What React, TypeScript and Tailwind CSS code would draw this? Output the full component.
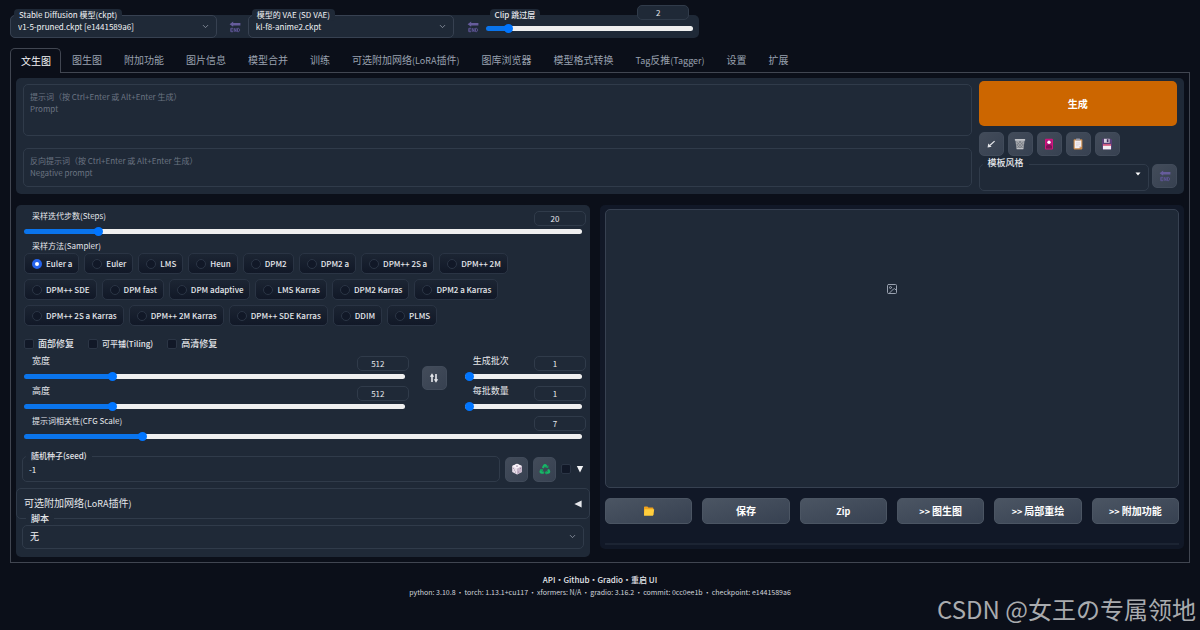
import { useState } from "react";
import type { CSSProperties, ReactNode } from "react";
import { ChevronDown, Image as ImageIcon } from "lucide-react";

const TABS = [
  "文生图",
  "图生图",
  "附加功能",
  "图片信息",
  "模型合并",
  "训练",
  "可选附加网络(LoRA插件)",
  "图库浏览器",
  "模型格式转换",
  "Tag反推(Tagger)",
  "设置",
  "扩展",
];

const SAMPLERS = [
  "Euler a",
  "Euler",
  "LMS",
  "Heun",
  "DPM2",
  "DPM2 a",
  "DPM++ 2S a",
  "DPM++ 2M",
  "DPM++ SDE",
  "DPM fast",
  "DPM adaptive",
  "LMS Karras",
  "DPM2 Karras",
  "DPM2 a Karras",
  "DPM++ 2S a Karras",
  "DPM++ 2M Karras",
  "DPM++ SDE Karras",
  "DDIM",
  "PLMS",
];

const VERSIONS = [
  "python: 3.10.8",
  "torch: 1.13.1+cu117",
  "xformers: N/A",
  "gradio: 3.16.2",
  "commit: 0cc0ee1b",
  "checkpoint: e1441589a6",
];

const hasLatin = (text: string) => /[\x21-\x7e]/.test(text);

// Latin letters in this typeface run large beside Chinese, so mixed labels go one size down.
const labelSize = (text: string) => (hasLatin(text) ? "text-[8px]" : "text-[9px]");

function MixedText({ text }: { text: string }) {
  return (
    <span>
      {text
        .split(/([\x20-\x7e]+)/)
        .filter(Boolean)
        .map((run, index) => (
          <span key={index} className={hasLatin(run) ? "text-[9px]" : undefined}>
            {run}
          </span>
        ))}
    </span>
  );
}

function EndArrowIcon() {
  return (
    <svg viewBox="0 0 12 12" className="size-3" aria-hidden="true">
      <path d="M.6 3.2 4.2.6v1.5h7.2v2.3H4.2v1.4z" fill="#665c9c" />
      <path
        d="M4 7.3H1.8v3.4H4M1.8 9h1.9M5.2 10.9V7.3l1.9 3.4V7.1M8.6 7.3v3.4h.6c1 0 1.4-.8 1.4-1.7s-.4-1.7-1.4-1.7z"
        fill="none"
        stroke="#5f5697"
        strokeWidth="1"
      />
    </svg>
  );
}

function ArrowDownLeftIcon() {
  return (
    <svg viewBox="0 0 12 12" className="size-3" aria-hidden="true">
      <path d="M9.6 3.1 5 7.3" stroke="#e5e7eb" strokeWidth="1.2" />
      <path d="M2.6 9.4 3.2 5.4 6.6 8.8z" fill="#e5e7eb" />
    </svg>
  );
}

function TrashIcon() {
  return (
    <svg viewBox="0 0 12 12" className="size-3" aria-hidden="true">
      <path d="M1.4 2.2h9.2l-1.2 9H2.6z" fill="#a3a6ab" />
      <path
        d="m2.4 3.6 6.4 6.6M5 3l4.6 4.4M2.6 6.4l4 4.4M9.6 3.6l-6.4 6.6M7 3 2.6 7.4M9.4 6.4l-4 4.4"
        stroke="#6b7079"
        strokeWidth=".6"
      />
      <rect x=".8" y=".9" width="10.4" height="1.8" rx=".6" fill="#c3c5c9" />
      <path d="M2.8 10.6h6.4" stroke="#c3c5c9" strokeWidth="1" />
    </svg>
  );
}

function CardIcon() {
  return (
    <svg viewBox="0 0 12 12" className="size-3" aria-hidden="true">
      <rect x="2" y=".8" width="8" height="10.6" rx=".9" fill="#d1167c" />
      <rect x="3" y="1.8" width="6" height="8.6" fill="#b8127a" />
      <path d="M3 8c2-1.6 4-1.6 6 0v2.4H3z" fill="#7d1457" />
      <circle cx="6" cy="4.2" r="1.7" fill="#fff" />
    </svg>
  );
}

function ClipboardIcon() {
  return (
    <svg viewBox="0 0 12 12" className="size-3" aria-hidden="true">
      <rect x="1.6" y="1.2" width="8.8" height="10.2" rx=".8" fill="#c98a4b" />
      <path d="M2.7 2.4h6.6v5.8l-2 2H2.7z" fill="#f4eef0" />
      <path d="M9.3 8.2h-2v2z" fill="#cbbccb" />
      <path d="M4 4.8h4M4 6.3h4M4 7.8h2.6" stroke="#c9c2cc" strokeWidth=".5" />
      <rect x="4" y=".6" width="4" height="2" rx=".5" fill="#9a9aa6" />
    </svg>
  );
}

function FloppyIcon() {
  return (
    <svg viewBox="0 0 12 12" className="size-3" aria-hidden="true">
      <path d="M1 1.6c0-.5.3-.8.8-.8h8l1.2 1.2v8.6c0 .4-.3.8-.8.8H1.8c-.5 0-.8-.4-.8-.8z" fill="#5b3f78" />
      <rect x="3" y=".8" width="5.6" height="4" fill="#d9d3e2" />
      <rect x="5.8" y="1.2" width="1.7" height="3" fill="#3f2c58" />
      <rect x="2" y="6.2" width="8" height="5.2" fill="#f3eef5" />
      <rect x="2" y="6.2" width="8" height="1.5" fill="#d2416b" />
    </svg>
  );
}

function DiceIcon() {
  return (
    <svg viewBox="0 0 12 12" className="size-3" aria-hidden="true">
      <path d="M6 .8 10.8 3v6L6 11.4 1.2 9V3z" fill="#e9dfe9" />
      <path d="M6 5.4 10.8 3v6L6 11.4z" fill="#c5b4c8" />
      <path d="M6 .8 10.8 3 6 5.4 1.2 3z" fill="#faf4fa" />
      <g fill="#8d7696">
        <ellipse cx="6" cy="3" rx="1" ry=".6" />
        <circle cx="2.6" cy="5.2" r=".5" />
        <circle cx="4.5" cy="8.9" r=".5" />
        <circle cx="3.5" cy="7" r=".5" />
        <circle cx="7.4" cy="8.9" r=".5" />
        <circle cx="9.4" cy="5.4" r=".5" />
      </g>
    </svg>
  );
}

function RecycleIcon() {
  return (
    <svg viewBox="0 0 12 12" className="size-3" aria-hidden="true">
      <g fill="none" stroke="#17b667" strokeWidth="2.2">
        <path d="M3.8 5 5 2.8c.5-.8 1.5-.8 2 0l.7 1.1" />
        <path d="M9 6.4 10 8c.4.9 0 1.7-1 1.7H7" />
        <path d="M4.8 9.7h-2c-1 0-1.5-.9-1-1.7l.8-1.4" />
      </g>
      <path d="m6.2 4.6 3 .6.4-3zM7.6 7.6v4.2L5.4 9.8zM.6 7.2l3-1.4.8 3z" fill="#12a35b" />
    </svg>
  );
}

function FolderIcon() {
  return (
    <svg viewBox="0 0 12 12" className="size-3" aria-hidden="true">
      <path d="M1 2.2c0-.5.3-.8.8-.8h2.6l1 1.2h4.2c.5 0 .8.3.8.8V10H1z" fill="#f0a21c" />
      <path d="M1.6 4.2h9.6L10.2 10.2c-.1.3-.4.6-.8.6H1.6c-.4 0-.6-.3-.6-.6z" fill="#ffce3d" />
    </svg>
  );
}

function SwapIcon() {
  return (
    <svg viewBox="0 0 12 12" className="size-3" aria-hidden="true">
      <path d="M4 10V3M8 2v7" stroke="#e5e7eb" strokeWidth="1.6" />
      <path d="M4 1.2 6.2 4.8H1.8zM8 10.8 5.8 7.2h4.4z" fill="#e5e7eb" />
    </svg>
  );
}

function ToolButton({
  label,
  size = "h-6 w-[25px]",
  className = "",
  children,
}: {
  label: string;
  size?: string;
  className?: string;
  children: ReactNode;
}) {
  return (
    <button
      type="button"
      aria-label={label}
      className={`flex shrink-0 items-center justify-center rounded-[5px] border border-[#414b5a] bg-linear-to-br from-[#434c5a] to-[#374151] ${size} ${className}`}
    >
      {children}
    </button>
  );
}

function Range({
  id,
  min,
  max,
  step = 1,
  value,
  onChange,
}: {
  id: string;
  min: number;
  max: number;
  step?: number;
  value: number;
  onChange: (value: number) => void;
}) {
  const fill = { "--fill": `${((value - min) / (max - min)) * 100}%` } as CSSProperties;
  return (
    <input
      id={id}
      type="range"
      min={min}
      max={max}
      step={step}
      value={value}
      onChange={(event) => onChange(Number(event.target.value))}
      style={fill}
      className="block h-[9px] w-full appearance-none bg-transparent [&::-webkit-slider-runnable-track]:h-[5px] [&::-webkit-slider-runnable-track]:rounded-full [&::-webkit-slider-runnable-track]:[background:linear-gradient(to_right,#0a74ec_var(--fill),#efefef_var(--fill))] [&::-webkit-slider-thumb]:-mt-0.5 [&::-webkit-slider-thumb]:size-[9px] [&::-webkit-slider-thumb]:appearance-none [&::-webkit-slider-thumb]:rounded-full [&::-webkit-slider-thumb]:bg-[#0075ff]"
    />
  );
}

function NumberBox({ label, value, onChange }: { label: string; value: number; onChange: (value: number) => void }) {
  return (
    <input
      type="text"
      inputMode="numeric"
      aria-label={label}
      value={value}
      onChange={(event) => onChange(Number(event.target.value) || 0)}
      className="block h-[15px] w-[52px] rounded-[5px] border border-[#303b4a] bg-[#1f2937] pr-2.5 text-center text-[8px] leading-3 text-gray-200"
    />
  );
}

function SliderField({
  id,
  label,
  min,
  max,
  step,
  initial,
}: {
  id: string;
  label: string;
  min: number;
  max: number;
  step?: number;
  initial: number;
}) {
  const [value, setValue] = useState(initial);
  return (
    <div>
      <div className="-mr-1 mb-px flex h-[15px] items-start justify-between pl-2">
        <label htmlFor={id} className={`leading-[10px] ${labelSize(label)}`}>
          {label}
        </label>
        <NumberBox label={`${label} 数值`} value={value} onChange={setValue} />
      </div>
      <Range id={id} min={min} max={max} step={step} value={value} onChange={setValue} />
    </div>
  );
}

function SelectField({ id, label, options }: { id: string; label: string; options: string[] }) {
  return (
    <div className="relative w-[30%]">
      <label
        htmlFor={id}
        className="absolute -top-1.5 left-1 z-10 rounded-[4px] bg-[#1f2937] px-[5px] text-[8px] leading-3 whitespace-nowrap text-gray-100"
      >
        {label}
      </label>
      <select
        id={id}
        className="block h-[23px] w-full appearance-none rounded-[5px] border border-[#374151] bg-[#1f2937] pl-[7px] text-[8px] text-gray-100"
      >
        {options.map((option) => (
          <option key={option}>{option}</option>
        ))}
      </select>
      <ChevronDown className="pointer-events-none absolute top-[7px] right-[7px] size-[9px] text-gray-400" />
    </div>
  );
}

function Header() {
  const [clip, setClip] = useState(2);
  return (
    <header className="flex h-[23px] w-[58.4%] rounded-[5px] bg-[#1f2937]">
      <SelectField id="ckpt" label="Stable Diffusion 模型(ckpt)" options={["v1-5-pruned.ckpt [e1441589a6]"]} />
      <button type="button" aria-label="刷新模型" className="flex flex-1 items-center justify-center pl-1.5">
        <EndArrowIcon />
      </button>
      <SelectField id="vae" label="模型的 VAE (SD VAE)" options={["kl-f8-anime2.ckpt"]} />
      <button type="button" aria-label="刷新 VAE" className="flex flex-1 items-center justify-center pl-1.5">
        <EndArrowIcon />
      </button>
      <div className="relative w-[31%] pt-[9px] pr-1.5">
        <label
          htmlFor="clip"
          className="absolute -top-1.5 left-1 rounded-[4px] bg-[#1f2937] px-[5px] text-[8px] leading-3 font-medium text-gray-200"
        >
          Clip 跳过层
        </label>
        <div className="absolute -top-2.5 right-2.5">
          <NumberBox label="Clip 跳过层 数值" value={clip} onChange={setClip} />
        </div>
        <Range id="clip" min={1} max={12} value={clip} onChange={setClip} />
      </div>
    </header>
  );
}

function Tabs() {
  const [active, setActive] = useState(0);
  return (
    <div role="tablist" className="mt-2.5 flex h-6 text-[10px] leading-3">
      {TABS.map((tab, index) => (
        <button
          key={tab}
          type="button"
          role="tab"
          aria-selected={index === active}
          onClick={() => setActive(index)}
          className={
            index === active
              ? "relative z-10 -mb-px rounded-t-[5px] border border-b-0 border-[#414651] bg-[#0b0f19] pr-[9px] pl-2.5 text-gray-100"
              : "px-[11px] text-gray-400"
          }
        >
          <MixedText text={tab} />
        </button>
      ))}
    </div>
  );
}

function PromptPanel() {
  const textareaClass =
    "block w-full resize-none rounded-[5px] border border-[#303b4a] bg-[#1f2937] px-1.5 py-1.5 text-[8px] leading-3 text-gray-100 placeholder:text-[#6b7482]";
  return (
    <section className="flex items-start gap-[7px] rounded-[5px] bg-[#1f2937] px-[7px] pt-[3px] pb-[3px]">
      <div className="flex flex-1 flex-col gap-3 pt-[3px] pb-1">
        <textarea
          aria-label="提示词"
          placeholder={"提示词（按 Ctrl+Enter 或 Alt+Enter 生成）\nPrompt"}
          className={`${textareaClass} h-[52px]`}
        />
        <textarea
          aria-label="反向提示词"
          placeholder={"反向提示词（按 Ctrl+Enter 或 Alt+Enter 生成）\nNegative prompt"}
          className={`${textareaClass} h-[39px]`}
        />
      </div>
      <div className="w-[17.2%]">
        <button
          type="button"
          className="block h-[45px] w-full rounded-[5px] bg-[#cc6600] text-[10px] leading-4 font-bold text-white"
        >
          生成
        </button>
        <div className="mt-1.5 flex gap-1">
          <ToolButton label="读取参数">
            <ArrowDownLeftIcon />
          </ToolButton>
          <ToolButton label="清空提示词">
            <TrashIcon />
          </ToolButton>
          <ToolButton label="显示附加网络">
            <CardIcon />
          </ToolButton>
          <ToolButton label="应用模板风格">
            <ClipboardIcon />
          </ToolButton>
          <ToolButton label="保存模板风格">
            <FloppyIcon />
          </ToolButton>
        </div>
        <div className="mt-2 flex items-start gap-[3px]">
          <div className="relative flex-1">
            <label
              htmlFor="styles"
              className="absolute -top-[7px] left-1 z-10 rounded-[4px] bg-[#1f2937] px-[5px] text-[9px] leading-3 font-medium text-gray-200"
            >
              模板风格
            </label>
            <select
              id="styles"
              defaultValue=""
              className="block h-[27px] w-full appearance-none rounded-[5px] border border-[#303b4a] bg-[#1f2937] px-2 text-[9px] text-gray-100"
            >
              <option value=""></option>
            </select>
            <svg
              viewBox="0 0 6 4"
              className="pointer-events-none absolute top-2 right-2 h-1 w-1.5"
              aria-hidden="true"
            >
              <path d="M.5.5h5L3 3.5z" fill="#fff" />
            </svg>
          </div>
          <ToolButton label="刷新模板风格">
            <EndArrowIcon />
          </ToolButton>
        </div>
      </div>
    </section>
  );
}

const CHECKBOX_CLASS =
  "size-2.5 appearance-none rounded-[2px] border border-[#2b3545] bg-[#111827] checked:bg-blue-600";

function SettingsPanel() {
  const [sampler, setSampler] = useState("Euler a");
  return (
    <section className="flex-1 rounded-[5px] bg-[#1f2937] pt-1.5 pb-2 text-[9px] leading-3 text-gray-200">
      <div className="px-2">
        <SliderField id="steps" label="采样迭代步数(Steps)" min={1} max={150} initial={20} />

        <fieldset className="mt-1">
          <legend className="mb-px pl-2 text-[8px]">采样方法(Sampler)</legend>
          <div className="flex flex-wrap gap-[5px]">
            {SAMPLERS.map((name) => (
              <label
                key={name}
                className="flex h-[21px] items-center gap-1 rounded-[5px] border border-[#2a3444] bg-linear-to-b from-[#1c2533] to-[#111827] pr-1.5 pl-[7px] text-[8px] font-medium"
              >
                <input
                  type="radio"
                  name="sampler"
                  checked={sampler === name}
                  onChange={() => setSampler(name)}
                  className="size-2.5 appearance-none rounded-full border border-[#2b3545] bg-[#111827] checked:border-[3px] checked:border-[#2563eb] checked:bg-white"
                />
                {name}
              </label>
            ))}
          </div>
        </fieldset>

        <div className="mt-3 mb-1.5 flex gap-3.5">
          {["面部修复", "可平铺(Tiling)", "高清修复"].map((name) => (
            <label key={name} className={`flex items-center gap-1 font-medium ${labelSize(name)}`}>
              <input type="checkbox" className={CHECKBOX_CLASS} />
              {name}
            </label>
          ))}
        </div>

        <div className="flex items-start">
          <div className="flex flex-1 flex-col gap-[5px]">
            <SliderField id="width" label="宽度" min={64} max={2048} step={8} initial={512} />
            <SliderField id="height" label="高度" min={64} max={2048} step={8} initial={512} />
          </div>
          <ToolButton label="交换宽高" className="mt-2.5 mr-[18px] ml-[17px]">
            <SwapIcon />
          </ToolButton>
          <div className="flex w-[21%] flex-col gap-[5px]">
            <SliderField id="batch-count" label="生成批次" min={1} max={100} initial={1} />
            <SliderField id="batch-size" label="每批数量" min={1} max={8} initial={1} />
          </div>
        </div>

        <div className="mt-[5px]">
          <SliderField id="cfg" label="提示词相关性(CFG Scale)" min={1} max={30} step={0.5} initial={7} />
        </div>
      </div>

      <div className="mt-[15px] flex items-center px-1.5">
        <div className="relative flex-1">
          <label
            htmlFor="seed"
            className="absolute -top-1.5 left-1 rounded-[4px] bg-[#1f2937] px-[5px] text-[8px] font-medium"
          >
            随机种子(seed)
          </label>
          <input
            id="seed"
            type="text"
            defaultValue="-1"
            className="block h-[26px] w-full rounded-[5px] border border-[#303b4a] bg-[#1f2937] pl-1.5 text-[8px] leading-3 text-gray-100"
          />
        </div>
        <ToolButton label="随机种子" size="h-[25px] w-[23px]" className="ml-[5px]">
          <DiceIcon />
        </ToolButton>
        <ToolButton label="重用上次种子" size="h-[25px] w-[23px]" className="ml-[5px]">
          <RecycleIcon />
        </ToolButton>
        <label className="ml-[5px] flex items-center gap-[5px]">
          <input type="checkbox" aria-label="更多种子选项" className={CHECKBOX_CLASS} />
          <svg viewBox="0 0 8 8" className="size-2" aria-hidden="true">
            <path d="M.8 1h6.4L4 7.4z" fill="#f3f4f6" />
          </svg>
        </label>
      </div>

      <button
        type="button"
        className="mt-1.5 flex h-[31px] w-full items-center justify-between rounded-[5px] border border-[#303b4a] px-[7px] text-[10px]"
      >
        <MixedText text="可选附加网络(LoRA插件)" />
        <svg viewBox="0 0 8 8" className="size-2" aria-hidden="true">
          <path d="M7.6.6v6.8L.4 4z" fill="#e5e7eb" />
        </svg>
      </button>

      <div className="relative mx-1.5 mt-1.5">
        <label htmlFor="script" className="absolute -top-3 left-1 rounded-[4px] bg-[#1f2937] px-[5px] font-medium">
          脚本
        </label>
        <select
          id="script"
          className="block h-6 w-full appearance-none rounded-[5px] border border-[#303b4a] bg-[#1f2937] pl-[7px] text-[9px] text-gray-100"
        >
          <option>无</option>
        </select>
        <ChevronDown className="pointer-events-none absolute top-[7px] right-[7px] size-[9px] text-gray-400" />
      </div>
    </section>
  );
}

function OutputPanel() {
  return (
    <section className="flex-1 self-start rounded-[5px] bg-[#111827] px-[5px] pt-1 pb-1">
      <div className="flex h-[279px] items-center justify-center rounded-[5px] border border-[#374151] bg-[#1f2937] pb-[120px]">
        <ImageIcon className="size-3 text-gray-400" strokeWidth={2} aria-hidden="true" />
      </div>
      <div className="mt-2.5 grid grid-cols-6 gap-2.5">
        {["folder", "保存", "Zip", ">> 图生图", ">> 局部重绘", ">> 附加功能"].map((name) => (
          <button
            key={name}
            type="button"
            aria-label={name === "folder" ? "打开文件夹" : undefined}
            className="flex h-[26px] items-center justify-center rounded-[5px] border border-[#4b5563] bg-linear-to-br from-[#4b5563] to-[#374151] text-[10px] leading-3 font-bold text-white"
          >
            {name === "folder" ? <FolderIcon /> : <MixedText text={name} />}
          </button>
        ))}
      </div>
      <hr className="mt-[19px] border-t-2 border-[#1c2433]" />
    </section>
  );
}

function Footer() {
  return (
    <footer className="mt-2.5 text-center">
      <nav className="flex justify-center text-[8px] leading-[14px] font-medium text-gray-200">
        <a href="#api">API</a>
        <span>·</span>
        <a href="#github">Github</a>
        <span>·</span>
        <a href="#gradio">Gradio</a>
        <span>·</span>
        <a href="#restart">重启 UI</a>
      </nav>
      <p className="flex justify-center gap-px text-[7px] leading-[10px] text-gray-300">
        {VERSIONS.map((version, index) => (
          <span key={version} className="flex gap-px">
            {index > 0 && <span>•</span>}
            {version}
          </span>
        ))}
      </p>
    </footer>
  );
}

export default function App() {
  return (
    <div className="relative min-h-screen bg-[#0b0f19] px-2.5 pt-[15px] font-['Noto_Sans_CJK_SC','Noto_Sans',sans-serif]">
      <Header />
      <Tabs />
      <main className="border border-[#414651] p-[5px]">
        <PromptPanel />
        <div className="mt-[11px] flex gap-2.5">
          <SettingsPanel />
          <OutputPanel />
        </div>
      </main>
      <Footer />
      <p className="absolute right-1 bottom-[5px] text-[24px] leading-8 text-[#a9abae]">CSDN @女王の专属领地</p>
    </div>
  );
}
